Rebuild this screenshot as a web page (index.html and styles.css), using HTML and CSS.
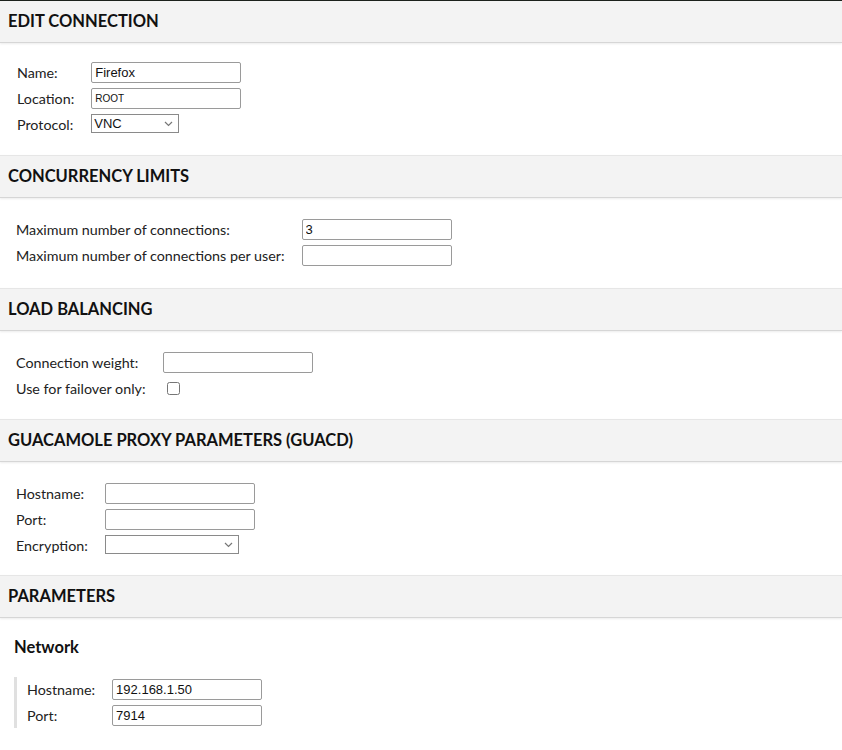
FILE: index.html
```html
<!DOCTYPE html>
<html lang="en">
<head>
    <meta charset="UTF-8">
    <meta name="viewport" content="width=device-width, initial-scale=1.0">
    <title>Edit Connection</title>
    <link rel="stylesheet" href="styles.css">
</head>
<body>
    <div class="topbar"></div>

    <div class="section first">
        <h2 class="header">EDIT CONNECTION</h2>
        <div class="fields">
            <label>Name:</label>
            <input type="text" class="w150" value="Firefox">
            <label>Location:</label>
            <input type="text" class="w150 small" value="ROOT">
            <label>Protocol:</label>
            <select class="sel-proto"><option>VNC</option></select>
        </div>
    </div>

    <div class="section concurrency">
        <h2 class="header">CONCURRENCY LIMITS</h2>
        <div class="fields">
            <label>Maximum number of connections:</label>
            <input type="text" class="w150" value="3">
            <label>Maximum number of connections per user:</label>
            <input type="text" class="w150">
        </div>
    </div>

    <div class="section">
        <h2 class="header">LOAD BALANCING</h2>
        <div class="fields">
            <label>Connection weight:</label>
            <input type="text" class="w150">
            <label>Use for failover only:</label>
            <input type="checkbox" class="check">
        </div>
    </div>

    <div class="section guacd">
        <h2 class="header">GUACAMOLE PROXY PARAMETERS (GUACD)</h2>
        <div class="fields">
            <label>Hostname:</label>
            <input type="text" class="w150">
            <label>Port:</label>
            <input type="text" class="w150">
            <label>Encryption:</label>
            <select class="sel-enc"><option></option></select>
        </div>
    </div>

    <div class="section">
        <h2 class="header">PARAMETERS</h2>
        <h3 class="group-title">Network</h3>
        <div class="group">
            <div class="fields">
                <label>Hostname:</label>
                <input type="text" class="w150" value="192.168.1.50">
                <label>Port:</label>
                <input type="text" class="w150" value="7914">
            </div>
        </div>
    </div>
</body>
</html>
```

FILE: styles.css
```css
body {
    margin: 0;
    font-family: Lato, "Noto Sans", sans-serif;
    font-size: 14.3px;
    color: #222;
    background: #fff;
}
.topbar {
    height: 1px;
    background: #1c221c;
}
.header {
    margin: 0;
    padding: 0 8px;
    height: 41px;
    line-height: 41px;
    font-size: 16.5px;
    font-weight: bold;
    color: #111;
    background: #f3f3f3;
    border-top: 1px solid #e6e6e6;
    border-bottom: 1px solid #d6d6d6;
    box-shadow: 0 1px 2px rgba(0, 0, 0, 0.08);
}
.section.first .header {
    border-top: none;
}
.fields {
    display: grid;
    grid-template-columns: max-content max-content;
    column-gap: 17px;
    row-gap: 5px;
    align-items: center;
    padding: 21px 16px 20px 16px;
}
.section.first .fields {
    padding: 19px 17px 20px 17px;
}
.section.concurrency .fields {
    padding-bottom: 22px;
}
.section.guacd .fields {
    padding-bottom: 19px;
}
.fields label {
    line-height: 21px;
}
input[type="text"] {
    box-sizing: border-box;
    height: 21px;
    padding: 0 3px;
    border: 1px solid #9a9a9a;
    border-radius: 2px;
    font-family: "Liberation Sans", Arial, sans-serif;
    font-size: 13px;
    color: #111;
}
.w150 {
    width: 150px;
}
.small {
    font-size: 10px !important;
}
select {
    -webkit-appearance: none;
    appearance: none;
    box-sizing: border-box;
    height: 19px;
    padding: 0 16px 0 2px;
    border: 1px solid #8a8a8a;
    border-radius: 0;
    font-family: "Liberation Sans", Arial, sans-serif;
    font-size: 13px;
    color: #111;
    background: #fff url("data:image/svg+xml,%3Csvg xmlns='http://www.w3.org/2000/svg' width='9' height='6' viewBox='0 0 9 6'%3E%3Cpath d='M1 1l3.5 3.5L8 1' fill='none' stroke='%23777' stroke-width='1.2'/%3E%3C/svg%3E") no-repeat right 5px center;
    align-self: start;
}
.sel-proto {
    width: 88px;
}
.sel-enc {
    width: 134px;
}
.check {
    margin: 0 0 0 4px;
    width: 13px;
    height: 13px;
}
.group-title {
    margin: 0;
    padding: 20px 14px 0 14px;
    font-size: 16.5px;
    font-weight: bold;
    color: #111;
    line-height: 19px;
}
.group {
    margin: 20px 0 0 14px;
    border-left: 3px solid #e0e0e0;
}
.group .fields {
    padding: 2px 10px 2px 10px;
}
```
